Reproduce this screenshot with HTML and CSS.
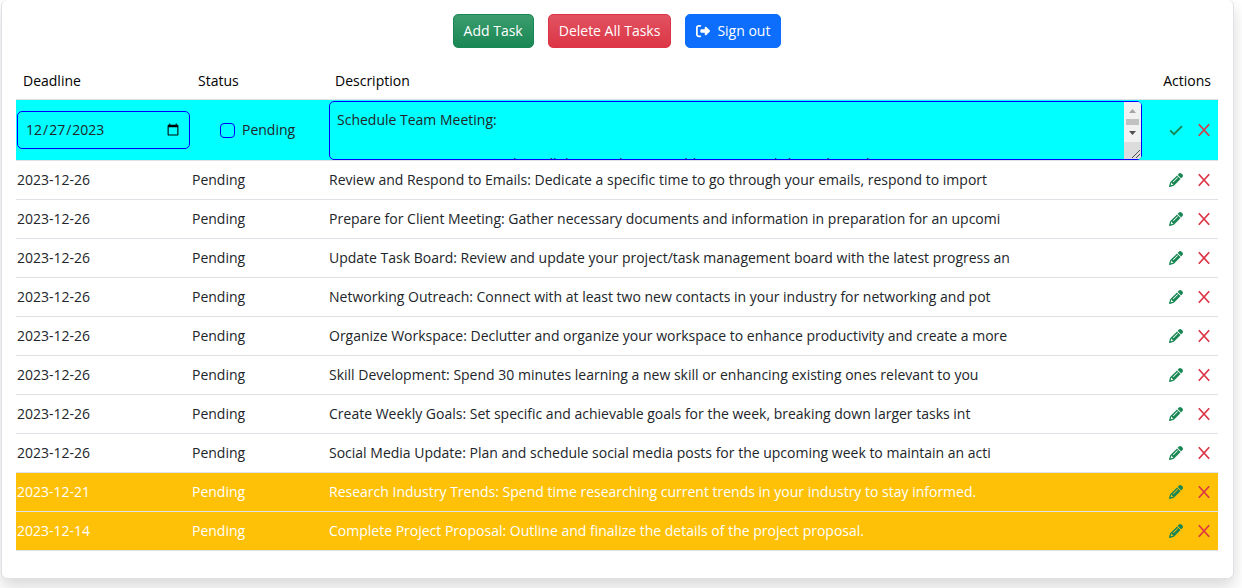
FILE: index.html
```html
<!DOCTYPE html>
<html lang="en">
<head>
<meta charset="utf-8">
<title>Tasks</title>
<link rel="stylesheet" href="styles.css">
</head>
<body>
<svg class="sprite" aria-hidden="true">
  <symbol id="pencil" viewBox="0 0 512 512"><path d="M410.3 231l11.3-11.3-33.9-33.9-62.1-62.1L291.7 89.8l-11.3 11.3-22.6 22.6L58.6 322.9c-10.4 10.4-18 23.3-22.2 37.4L1 480.7c-2.5 8.4-.2 17.5 6.1 23.7s15.3 8.5 23.7 6.1l120.3-35.4c14.1-4.2 27-11.8 37.4-22.2L387.7 253.7 410.3 231zM160 399.4l-9.1 22.7c-4 3.1-8.5 5.4-13.3 6.9L59.4 452l23-78.1c1.4-4.9 3.8-9.4 6.9-13.3l22.7-9.1v32c0 8.8 7.2 16 16 16h32zM362.7 18.7L348.3 33.2 325.7 55.8 314.3 67.1l33.9 33.9 62.1 62.1 33.9 33.9 11.3-11.3 22.6-22.6 14.5-14.5c25-25 25-65.5 0-90.5L453.3 18.7c-25-25-65.5-25-90.5 0zm-47.4 168l-144 144c-6.2 6.2-16.4 6.2-22.6 0s-6.2-16.4 0-22.6l144-144c6.2-6.2 16.4-6.2 22.6 0s6.2 16.4 0 22.6z"/></symbol>
  <symbol id="cross" viewBox="0 0 14 14"><path d="M1.8 1.2 12.2 12.8M12.2 1.2 1.8 12.8" fill="none" stroke="currentColor" stroke-width="1.7"/></symbol>
  <symbol id="check" viewBox="0 0 14 14"><path d="M1.2 7.4 5 11.2 13 3.2" fill="none" stroke="currentColor" stroke-width="1.9"/></symbol>
</svg>
<main class="card">
  <div class="toolbar">
    <button class="btn btn-add" type="button">Add Task</button>
    <button class="btn btn-delete" type="button">Delete All Tasks</button>
    <button class="btn btn-signout" type="button">
      <svg class="icon" viewBox="0 0 512 512" aria-hidden="true"><path d="M377.9 105.9L500.7 228.7c7.2 7.2 11.3 17.1 11.3 27.3s-4.1 20.1-11.3 27.3L377.9 406.1c-6.4 6.4-15 9.9-24 9.9c-18.7 0-33.9-15.2-33.9-33.9l0-62.1-128 0c-17.7 0-32-14.3-32-32l0-64c0-17.7 14.3-32 32-32l128 0 0-62.1c0-18.7 15.2-33.9 33.9-33.9c9 0 17.6 3.6 24 9.9zM160 96L96 96c-17.7 0-32 14.3-32 32l0 256c0 17.7 14.3 32 32 32l64 0c17.7 0 32 14.3 32 32s-14.3 32-32 32l-64 0c-53 0-96-43-96-96L0 128C0 75 43 32 96 32l64 0c17.7 0 32 14.3 32 32s-14.3 32-32 32z"/></svg>
      Sign out
    </button>
  </div>
  <table class="tasks">
    <colgroup><col class="col-date"><col class="col-status"><col><col class="col-actions"></colgroup>
    <thead>
      <tr><th>Deadline</th><th>Status</th><th>Description</th><th class="actions-head">Actions</th></tr>
    </thead>
    <tbody>
      <tr class="editing">
        <td><input class="field date" type="date" value="2023-12-27" aria-label="Deadline"></td>
        <td><label class="check"><input class="box" type="checkbox">Pending</label></td>
        <td><div class="editor"><textarea class="field text" aria-label="Description">Schedule Team Meeting:

Set up a convenient time when all the members are able to join and share the tasks.

Send the invitations and the agenda in advance.</textarea>
          <svg class="scrollbar" viewBox="0 0 17 57" aria-hidden="true">
            <path d="M0 0H14a3 3 0 0 1 3 3V54a3 3 0 0 1-3 3H0Z" fill="#f1f1f1"/>
            <path d="M0 40H17V54a3 3 0 0 1-3 3H0Z" fill="#dcdcdc"/>
            <path d="M5 11 8.500 7 12 11Z" fill="#a3a3a3"/>
            <path d="M2 17H15V23H2Z" fill="#c1c1c1"/>
            <path d="M5 29 8.500 33 12 29Z" fill="#505050"/>
            <path d="M8 56 16 48M12 56 16 52" stroke="#505050" fill="none"/>
          </svg></div></td>
        <td><div class="actions"><button class="act save" type="button" aria-label="Save"><svg class="icon"><use href="#check"/></svg></button><button class="act remove" type="button" aria-label="Delete"><svg class="icon"><use href="#cross"/></svg></button></div></td>
      </tr>
      <tr><td>2023-12-26</td><td>Pending</td><td>Review and Respond to Emails: Dedicate a specific time to go through your emails, respond to import</td><td><div class="actions"><button class="act edit" type="button" aria-label="Edit"><svg class="icon"><use href="#pencil"/></svg></button><button class="act remove" type="button" aria-label="Delete"><svg class="icon"><use href="#cross"/></svg></button></div></td></tr>
      <tr><td>2023-12-26</td><td>Pending</td><td>Prepare for Client Meeting: Gather necessary documents and information in preparation for an upcomi</td><td><div class="actions"><button class="act edit" type="button" aria-label="Edit"><svg class="icon"><use href="#pencil"/></svg></button><button class="act remove" type="button" aria-label="Delete"><svg class="icon"><use href="#cross"/></svg></button></div></td></tr>
      <tr><td>2023-12-26</td><td>Pending</td><td>Update Task Board: Review and update your project/task management board with the latest progress an</td><td><div class="actions"><button class="act edit" type="button" aria-label="Edit"><svg class="icon"><use href="#pencil"/></svg></button><button class="act remove" type="button" aria-label="Delete"><svg class="icon"><use href="#cross"/></svg></button></div></td></tr>
      <tr><td>2023-12-26</td><td>Pending</td><td>Networking Outreach: Connect with at least two new contacts in your industry for networking and pot</td><td><div class="actions"><button class="act edit" type="button" aria-label="Edit"><svg class="icon"><use href="#pencil"/></svg></button><button class="act remove" type="button" aria-label="Delete"><svg class="icon"><use href="#cross"/></svg></button></div></td></tr>
      <tr><td>2023-12-26</td><td>Pending</td><td>Organize Workspace: Declutter and organize your workspace to enhance productivity and create a more</td><td><div class="actions"><button class="act edit" type="button" aria-label="Edit"><svg class="icon"><use href="#pencil"/></svg></button><button class="act remove" type="button" aria-label="Delete"><svg class="icon"><use href="#cross"/></svg></button></div></td></tr>
      <tr><td>2023-12-26</td><td>Pending</td><td>Skill Development: Spend 30 minutes learning a new skill or enhancing existing ones relevant to you</td><td><div class="actions"><button class="act edit" type="button" aria-label="Edit"><svg class="icon"><use href="#pencil"/></svg></button><button class="act remove" type="button" aria-label="Delete"><svg class="icon"><use href="#cross"/></svg></button></div></td></tr>
      <tr><td>2023-12-26</td><td>Pending</td><td>Create Weekly Goals: Set specific and achievable goals for the week, breaking down larger tasks int</td><td><div class="actions"><button class="act edit" type="button" aria-label="Edit"><svg class="icon"><use href="#pencil"/></svg></button><button class="act remove" type="button" aria-label="Delete"><svg class="icon"><use href="#cross"/></svg></button></div></td></tr>
      <tr><td>2023-12-26</td><td>Pending</td><td>Social Media Update: Plan and schedule social media posts for the upcoming week to maintain an acti</td><td><div class="actions"><button class="act edit" type="button" aria-label="Edit"><svg class="icon"><use href="#pencil"/></svg></button><button class="act remove" type="button" aria-label="Delete"><svg class="icon"><use href="#cross"/></svg></button></div></td></tr>
      <tr class="overdue"><td>2023-12-21</td><td>Pending</td><td>Research Industry Trends: Spend time researching current trends in your industry to stay informed.</td><td><div class="actions"><button class="act edit" type="button" aria-label="Edit"><svg class="icon"><use href="#pencil"/></svg></button><button class="act remove" type="button" aria-label="Delete"><svg class="icon"><use href="#cross"/></svg></button></div></td></tr>
      <tr class="overdue"><td>2023-12-14</td><td>Pending</td><td>Complete Project Proposal: Outline and finalize the details of the project proposal.</td><td><div class="actions"><button class="act edit" type="button" aria-label="Edit"><svg class="icon"><use href="#pencil"/></svg></button><button class="act remove" type="button" aria-label="Delete"><svg class="icon"><use href="#cross"/></svg></button></div></td></tr>
    </tbody>
  </table>
</main>
</body>
</html>
```
FILE: styles.css
```css
* { box-sizing: border-box; }

body {
  margin: 0;
  background: #fff;
  color: #212529;
  font: 14px/22px "Open Sans", "Noto Sans", sans-serif;
}

.sprite { display: none; }

.card {
  margin: 0 8px 9px 1px;
  padding: 14px 15px 27px 14px;
  background: #fff;
  border: 1px solid #dee2e6;
  border-top: 0;
  border-radius: 6px;
  box-shadow: 0 8px 16px rgba(0, 0, 0, 0.15);
}

.toolbar {
  display: flex;
  justify-content: center;
  gap: 14px;
  margin-bottom: 14px;
}

.btn {
  display: flex;
  align-items: center;
  gap: 7px;
  height: 34px;
  padding: 0 10px;
  border: 1px solid;
  border-radius: 5px;
  color: #fff;
  font: inherit;
}

.btn-add { background: linear-gradient(#3c9c6e, #198754); border-color: #198754; }
.btn-delete { background: linear-gradient(#e15361, #dc3545); border-color: #dc3545; }
.btn-signout { background: #0d6efd; border-color: #0d6efd; }

.icon {
  display: block;
  width: 14px;
  height: 14px;
  fill: currentColor;
}

.tasks {
  width: 100%;
  table-layout: fixed;
  border-collapse: separate;
  border-spacing: 0;
}

.col-date { width: 175px; }
.col-status { width: 137px; }
.col-actions { width: 75px; }

th, td {
  padding: 0 1px;
  border-bottom: 1px solid #dee2e6;
  text-align: left;
  vertical-align: middle;
}

th {
  height: 38px;
  padding: 0 7px;
  color: #000;
  font-weight: 400;
}

.actions-head { text-align: right; }

td { height: 39px; }
.editing td { height: 61px; background: #0ff; color: #212529; }
.overdue td { background: #ffc107; color: #fff; }

.field {
  display: block;
  background: transparent;
  border: 1px solid #00f;
  border-radius: 5px;
  color: #212529;
  font: inherit;
}

.date {
  width: 173px;
  height: 38px;
  padding: 0 7px;
}

.editor {
  position: relative;
  width: 813px;
  max-width: 100%;
}

.text {
  width: 100%;
  height: 59px;
  padding: 7px 24px 7px 7px;
  overflow-y: scroll;
  resize: none;
}

.scrollbar {
  position: absolute;
  top: 1px;
  right: 1px;
  width: 17px;
  height: 57px;
}

.check {
  display: flex;
  align-items: center;
  gap: 7px;
  padding-left: 28px;
}

.box {
  appearance: none;
  width: 15px;
  height: 15px;
  margin: 0;
  border: 1px solid #00f;
  border-radius: 4px;
}

.actions {
  display: flex;
  justify-content: flex-end;
  gap: 14px;
  padding-right: 6px;
}

.act {
  padding: 0;
  background: none;
  border: 0;
}

.edit, .save { color: #198754; }
.remove { color: #dc3545; }
```
